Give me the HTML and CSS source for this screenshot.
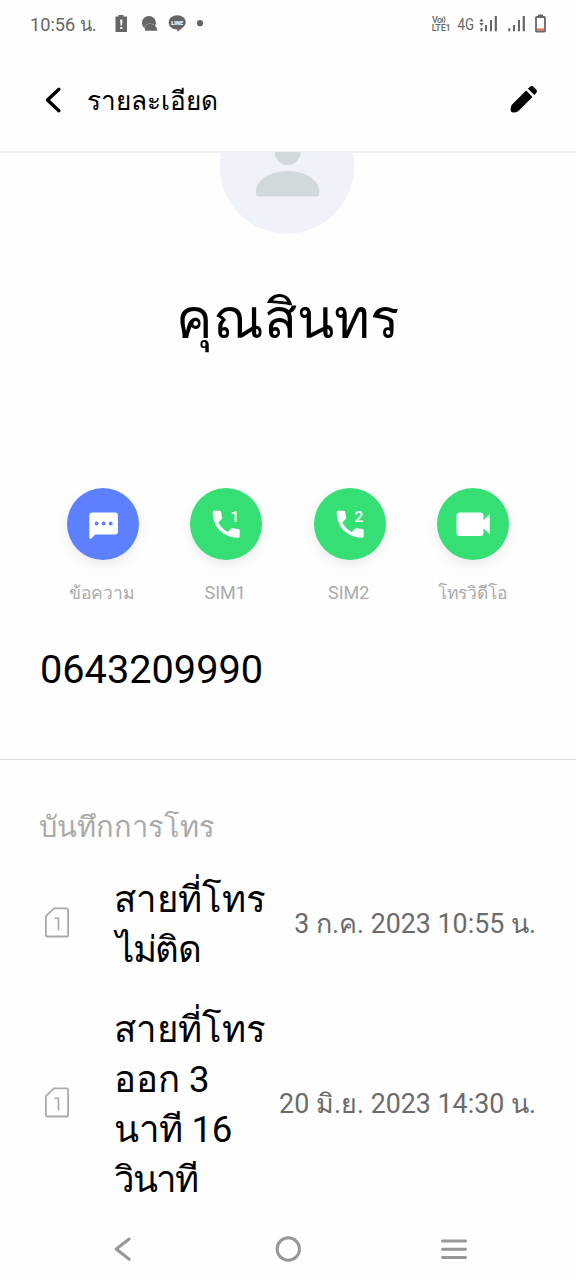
FILE: index.html
```html
<!DOCTYPE html>
<html lang="th">
<head>
<meta charset="utf-8">
<title>รายละเอียด</title>
<link rel="stylesheet" href="styles.css">
</head>
<body>
<div class="screen">
  <div class="status">
    <span class="clock">10:56 น.</span>
    <svg class="notices" width="92" height="24" viewBox="114 12 92 24">
      <path fill="#666" d="M118.500 15h5v1.500H127V32h-11.500V16.500h3z"/>
      <path fill="#fff" d="M120.200 19.500h2.200l-.4 6h-1.400zM120.300 27h2v2h-2z"/>
      <path fill="#666" d="M149 16c4 0 6.800 3 6.800 6.700 0 1.300-.3 2.200-.8 3.200 1.600.8 2 2.200 2.200 4.900h-12.400c.1-.8.200-1.500.5-2-2-1.200-3.300-3.300-3.300-6 0-3.800 3-6.800 7-6.800z"/>
      <path fill="none" stroke="#bbb" stroke-width=".7" stroke-dasharray="2 1" d="M144.500 27.500c1-4 7-5.500 10-2"/>
      <path fill="#666" d="M177.200 15.300c5 0 8.600 3.200 8.600 7 0 4-4.600 6.500-8 9.400l-.6-2.300c-5-.2-8.500-3-8.500-7s3.600-7.100 8.500-7.100z"/>
      <text class="line-mark" x="177.200" y="24.800" text-anchor="middle" textLength="12">LINE</text>
      <circle cx="200" cy="23.200" r="3.100" fill="#666"/>
    </svg>
    <svg class="signals" width="118" height="24" viewBox="430 12 118 24">
      <text class="volte" x="432" y="22.800" textLength="10">Vo</text>
      <path fill="none" stroke="#666" stroke-width="1" d="M442 17.500q1.600 2.500 0 5M443.800 16.300q2.400 3.500 0 7"/>
      <text class="volte" x="431.700" y="31.200" textLength="19">LTE1</text>
      <text class="net" x="457.500" y="29.700" textLength="16.500" lengthAdjust="spacingAndGlyphs">4G</text>
      <path fill="#666" d="M481.500 18.500l2.200 3h-4.400zM481.500 26l2.200-3h-4.400zM480.500 28h2v3.300h-2zM485 25h2v6.300h-2zM490 20h2v11.300h-2zM494.700 16h2.200v15.300h-2.200zM508.300 28.300h2v3h-2zM513 25h2v6.300h-2zM518 20h2v11.300h-2zM522.700 16h2.200v15.300h-2.200z"/>
      <path fill="#666" d="M538 14.500h5v2h-5z"/>
      <rect x="536" y="17" width="9" height="14.500" rx=".7" fill="none" stroke="#666" stroke-width="1.800"/>
      <path fill="#f0634a" d="M537 28.500h7v2h-7z"/>
    </svg>
  </div>

  <header class="bar">
    <svg class="back" width="18" height="28" viewBox="0 0 18 28"><path fill="none" stroke="#000" stroke-width="3.400" stroke-linecap="round" stroke-linejoin="round" d="M14.900 3.300L3.500 14l11.400 10.700"/></svg>
    <h1 class="title">รายละเอียด</h1>
    <svg class="edit" width="30" height="30" viewBox="0 0 30 30"><g transform="translate(14.500 15.500) rotate(-45)"><path d="M-12-4.500H8.200V4.500H-12Q-15.500 3.400-17 1Q-17.500 0-17-1Q-15.500-3.400-12-4.500zM10.800-4.500H13.300Q16-4.500 16-2V2Q16 4.500 13.300 4.500H10.800z"/></g></svg>
  </header>

  <section class="profile">
    <svg class="avatar" width="136" height="82" viewBox="220 152 136 82">
      <circle cx="287" cy="166.500" r="67.200" fill="#eff3f9"/>
      <circle cx="287.700" cy="152" r="13" fill="#d2d9dd"/>
      <path fill="#d2d9dd" d="M256 194c-1-15 15-23 31.700-23s32.700 8 31.700 23q0 2.500-2.500 2.500h-58.400q-2.500 0-2.500-2.500z"/>
    </svg>
    <h2 class="name">คุณสินทร</h2>
  </section>

  <div class="actions">
    <div class="action">
      <svg class="disc message" width="72" height="72" viewBox="0 0 72 72"><path fill="#fff" d="M25.500 24.500h22.200q3.300 0 3.300 3.300v15.400q0 3.300-3.300 3.300H28.200l-3.900 4q-1.800 1-2-1V27.800q0-3.300 3.200-3.300z"/><circle cx="29.700" cy="35.500" r="1.900" fill="#5c80ff"/><circle cx="36.700" cy="35.500" r="1.900" fill="#5c80ff"/><circle cx="43.700" cy="35.500" r="1.900" fill="#5c80ff"/></svg>
      <span class="label thai">ข้อความ</span>
    </div>
    <div class="action">
      <svg class="disc call" width="72" height="72" viewBox="0 0 72 72"><path fill="#fff" d="M24.200 22.700h5.700q1.300 0 1.400 1.500 0 2.500.8 4.900.3 1.300-.6 2.200l-3.200 3.100c2.300 4.400 5.300 7.300 9.600 9.500l3-3.100q1-1 2.300-.6 2.500.8 5 .8 1.500.2 1.500 1.600v5.600q0 1.500-1.500 1.500C33.500 49.700 22.700 38.800 22.700 24.200q0-1.500 1.500-1.500z"/><text class="sim-no" x="45" y="33.500" text-anchor="middle">1</text></svg>
      <span class="label">SIM1</span>
    </div>
    <div class="action">
      <svg class="disc call" width="72" height="72" viewBox="0 0 72 72"><path fill="#fff" d="M24.200 22.700h5.700q1.300 0 1.400 1.500 0 2.500.8 4.900.3 1.300-.6 2.200l-3.200 3.100c2.300 4.400 5.300 7.300 9.600 9.500l3-3.100q1-1 2.300-.6 2.500.8 5 .8 1.500.2 1.500 1.600v5.600q0 1.500-1.500 1.500C33.500 49.700 22.700 38.800 22.700 24.200q0-1.500 1.500-1.500z"/><text class="sim-no" x="45" y="33.500" text-anchor="middle">2</text></svg>
      <span class="label">SIM2</span>
    </div>
    <div class="action">
      <svg class="disc call" width="72" height="72" viewBox="0 0 72 72"><path fill="#fff" d="M22.500 24.500h21q3 0 3 3v4.700l6.200-6v20l-6.200-6v4.800q0 3-3 3h-21q-3 0-3-3V27.500q0-3 3-3z"/></svg>
      <span class="label thai">โทรวิดีโอ</span>
    </div>
  </div>

  <div class="number">0643209990</div>

  <section class="log">
    <h3 class="log-title">บันทึกการโทร</h3>
    <div class="entry">
      <svg class="sim" width="26" height="32" viewBox="0 0 26 32"><path fill="none" stroke="#aaa" stroke-width="1.800" stroke-linejoin="round" d="M10 1.300h12.500q1.600 0 1.600 1.600v25q0 1.600-1.600 1.600h-19q-1.600 0-1.600-1.600V9.100z"/><path fill="none" stroke="#aaa" stroke-width="1.600" d="M10.500 11.200h4V23.400"/></svg>
      <div class="kind"><span>สายที่โทร</span><span class="tight inset">ไม่ติด</span></div>
      <time class="when">3 ก.ค. 2023 10:55 น.</time>
    </div>
    <div class="entry">
      <svg class="sim" width="26" height="32" viewBox="0 0 26 32"><path fill="none" stroke="#aaa" stroke-width="1.800" stroke-linejoin="round" d="M10 1.300h12.500q1.600 0 1.600 1.600v25q0 1.600-1.600 1.600h-19q-1.600 0-1.600-1.600V9.100z"/><path fill="none" stroke="#aaa" stroke-width="1.600" d="M10.500 11.200h4V23.400"/></svg>
      <div class="kind"><span>สายที่โทร</span><span>ออก 3</span><span class="snug">นาที 16</span><span class="tighter">วินาที</span></div>
      <time class="when">20 มิ.ย. 2023 14:30 น.</time>
    </div>
  </section>

  <nav class="keys">
    <svg width="28" height="28" viewBox="0 0 28 28"><path fill="none" stroke="#979797" stroke-width="3" stroke-linecap="round" stroke-linejoin="round" d="M21.200 4L8.200 14l13 10.200"/></svg>
    <svg width="28" height="28" viewBox="0 0 28 28"><circle cx="14.300" cy="14" r="11.200" fill="none" stroke="#979797" stroke-width="3"/></svg>
    <svg width="28" height="28" viewBox="0 0 28 28"><path fill="none" stroke="#979797" stroke-width="3" stroke-linecap="round" d="M2.500 6h23M2.500 14.300h23M2.500 22.600h23"/></svg>
  </nav>
</div>
</body>
</html>
```
FILE: styles.css
```css
* { box-sizing: border-box; }
body { margin: 0; background: #fefefe; color: #000; font-family: Roboto, sans-serif; }
h1, h2, h3 { margin: 0; font-weight: 400; }
svg { display: block; flex: none; }
.screen { width: 576px; height: 1280px; display: flex; flex-direction: column; overflow: hidden; }

.status { height: 48px; padding: 0 28px 0 30px; display: flex; align-items: center; color: #666; flex: none; }
.clock { width: 84px; padding-top: 2px; font-size: 18.200px; line-height: 24px; white-space: nowrap; }
.signals { margin-left: auto; }
.line-mark { font-size: 5.500px; font-weight: 900; fill: #fff; }
.volte { font-size: 9px; font-weight: 500; fill: #666; }
.net { font-size: 16.500px; fill: #666; }

.bar { height: 105px; padding: 1px 37px 0 44px; border-bottom: 2px solid #efefef; display: flex; align-items: center; flex: none; }
.title { margin-left: 25px; padding-top: 1px; font-size: 26.200px; line-height: 40px; }
.edit { margin-left: auto; margin-top: -3px; }

.profile { height: 335px; display: flex; flex-direction: column; align-items: center; flex: none; }
.avatar { margin-top: -1px; }
.name { margin: 45px 2px 0 0; font-size: 54.600px; line-height: 80px; }

.actions { padding: 0 41px; display: grid; grid-template-columns: repeat(4, 1fr); height: 149px; flex: none; }
.action { display: flex; flex-direction: column; align-items: center; }
.disc { border-radius: 50%; box-shadow: 0 5px 12px rgba(0, 0, 0, .08); }
.message { background: #5c80ff; }
.call { background: #35df73; }
.sim-no { font-size: 15.500px; font-weight: 500; fill: #fff; }
.label { margin: 21px 2px 0 0; font-size: 18px; line-height: 24px; color: #aaa; }
.thai { font-size: 17.400px; }

.number { height: 123px; padding: 8px 40px; border-bottom: 1px solid #dedede; font-size: 39.700px; line-height: 50px; flex: none; }

.log-title { height: 98px; padding: 47px 39px 0; font-size: 29px; line-height: 40px; color: #aaa; }
.entry { height: 130px; padding: 0 40px 0 44px; display: flex; align-items: center; }
.entry + .entry { height: 230px; }
.kind { margin: 3px 0 0 44px; width: 155px; display: flex; flex-direction: column; font-size: 36.600px; line-height: 50px; white-space: nowrap; }
.snug { letter-spacing: -.4px; }
.tight { letter-spacing: -1.300px; }
.tighter { letter-spacing: -2px; }
.inset { padding-left: 2px; }
.when { margin-left: auto; padding-top: 1px; font-size: 26.800px; line-height: 40px; color: #6b6b6b; white-space: nowrap; }

.keys { height: 62px; padding: 0 108px; display: flex; align-items: center; justify-content: space-between; flex: none; }
```
